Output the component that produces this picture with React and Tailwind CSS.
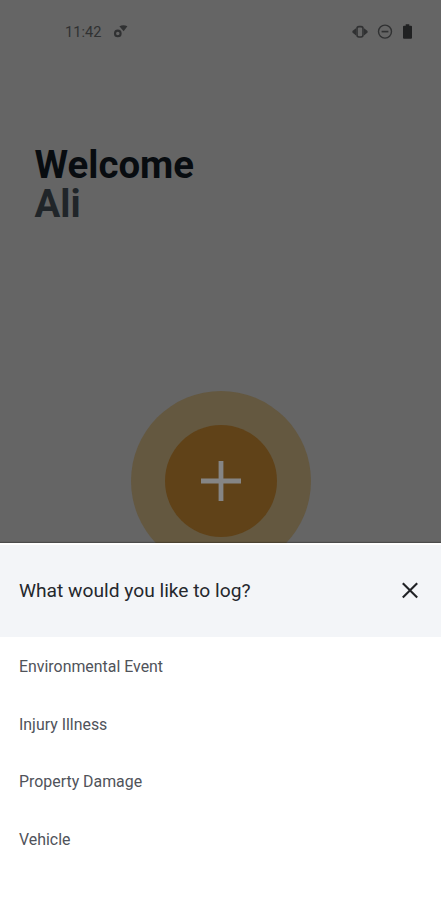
import { useState } from 'react';

const LOG_TYPES = ['Environmental Event', 'Injury Illness', 'Property Damage', 'Vehicle'];

function StatusBar() {
  return (
    <div className="flex h-16 items-center justify-between pl-[65px] pr-7 text-[#303132]">
      <div className="flex items-center">
        <span className="w-9 whitespace-nowrap text-[14.6px] leading-5">11:42</span>
        <svg className="ml-3 h-4 w-4" viewBox="0 0 16 16" fill="none">
          <circle cx="4.8" cy="9.4" r="2.8" stroke="currentColor" strokeWidth="2.1" />
          <path d="M6.4 2.2Q10.4 .2 14.4 2.2L10.6 7.2Z" fill="currentColor" />
        </svg>
      </div>
      <div className="flex items-center">
        <svg className="h-4 w-4" viewBox="0 0 16 16" fill="none" stroke="currentColor">
          <rect x="5" y="2.6" width="6" height="10.4" rx="2" strokeWidth="1.6" />
          <path d="M4 4.2V11.4L.4 8.6V7ZM12 4.2V11.4L15.6 8.6V7Z" fill="currentColor" stroke="none" />
        </svg>
        <svg className="ml-[9px] h-4 w-4" viewBox="0 0 16 16" fill="none" stroke="currentColor">
          <circle cx="8" cy="7.6" r="6.5" strokeWidth="1.4" />
          <path d="M4.6 7.6H11.4" strokeWidth="1.7" />
        </svg>
        <svg className="ml-[10px] mr-px h-4 w-[9px] text-[#202122]" viewBox="0 0 9 16" fill="currentColor">
          <path d="M2.7 .2H6.3V1.7H8A1 1 0 0 1 9 2.7V13.7A1 1 0 0 1 8 14.7H1A1 1 0 0 1 0 13.7V2.7A1 1 0 0 1 1 1.7H2.7Z" />
        </svg>
      </div>
    </div>
  );
}

function LogSheet({ onClose }) {
  return (
    <div className="relative z-10 flex h-[357px] flex-col border-t-2 border-white bg-white shadow-[0_-1px_1px_rgba(0,0,0,0.25)]">
      <div className="flex h-[92px] shrink-0 items-center justify-between bg-[#f3f5f8] pl-[19px] pr-[22px]">
        <h2 className="text-[19.2px] leading-6 text-[#25282d]">What would you like to log?</h2>
        <button type="button" aria-label="Close" onClick={onClose}>
          <svg className="h-[18px] w-[18px]" viewBox="0 0 18 18" fill="none">
            <path d="M1.8 1.2L16.2 15.6M16.2 1.2L1.8 15.6" stroke="#202226" strokeWidth="2.1" />
          </svg>
        </button>
      </div>
      <ul className="pt-[1.5px]">
        {LOG_TYPES.map((type) => (
          <li key={type} className="flex h-[57.5px] items-center pl-[19px] text-[15.9px] text-[#50535a]">
            {type}
          </li>
        ))}
      </ul>
    </div>
  );
}

export default function App() {
  const [open, setOpen] = useState(true);

  return (
    <div className="flex h-[900px] w-full flex-col overflow-hidden bg-[#656565] font-['Roboto',sans-serif]">
      <StatusBar />
      <div className="pl-[34.5px] pt-[81px] text-[38.4px] font-bold leading-[39px]">
        <h1 className="text-[#080c10]">Welcome</h1>
        <p className="text-[#202529]">Ali</p>
      </div>
      <div className="mt-[167.5px] flex min-h-0 flex-1 justify-center overflow-hidden">
        <button
          type="button"
          aria-label="Add log"
          onClick={() => setOpen(true)}
          className="ml-px flex h-[180px] w-[180px] shrink-0 items-center justify-center rounded-full bg-[#645840]"
        >
          <span className="flex h-[112px] w-[112px] items-center justify-center rounded-full bg-[#604218]">
            <svg className="h-[42px] w-[42px]" viewBox="0 0 42 42" fill="none">
              <path d="M21 1V41M1 21H41" stroke="#858585" strokeWidth="4.8" />
            </svg>
          </span>
        </button>
      </div>
      {open && <LogSheet onClose={() => setOpen(false)} />}
    </div>
  );
}
